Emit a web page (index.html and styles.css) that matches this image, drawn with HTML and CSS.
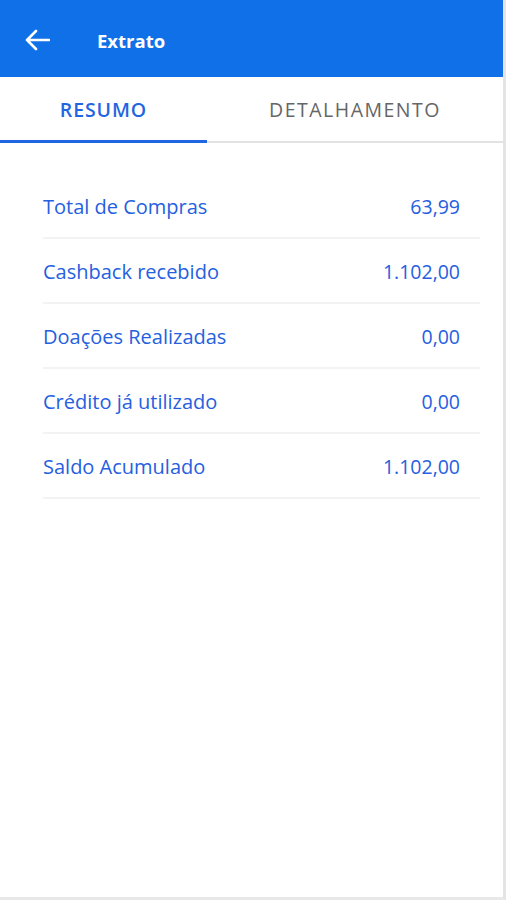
FILE: index.html
```html
<!DOCTYPE html>
<html lang="pt">
<head>
<meta charset="utf-8">
<link rel="stylesheet" href="styles.css">
</head>
<body>
<div class="frame">
  <header class="appbar">
    <svg class="back" width="26" height="22" viewBox="0 0 26 22" aria-hidden="true">
      <path d="M25 11H3M12 2L3 11l9 9" fill="none" stroke="#fff" stroke-width="2.6" stroke-linecap="round" stroke-linejoin="round"/>
    </svg>
    <h1 class="title">Extrato</h1>
  </header>
  <nav class="tabs">
    <div class="tab active">RESUMO</div>
    <div class="tab">DETALHAMENTO</div>
  </nav>
  <section class="list">
    <div class="row"><span>Total de Compras</span><span class="val">63,99</span></div>
    <div class="row"><span>Cashback recebido</span><span class="val">1.102,00</span></div>
    <div class="row"><span>Doações Realizadas</span><span class="val">0,00</span></div>
    <div class="row"><span>Crédito já utilizado</span><span class="val">0,00</span></div>
    <div class="row"><span>Saldo Acumulado</span><span class="val">1.102,00</span></div>
  </section>
</div>
</body>
</html>
```
FILE: styles.css
```css
html, body {
  margin: 0;
  padding: 0;
  background: #fff;
}
body {
  font-family: "Open Sans", "Liberation Sans", sans-serif;
}
.frame {
  width: 503px;
  height: 897px;
  border-right: 3px solid #e4e4e4;
  border-bottom: 3px solid #e8e8e8;
  background: #fff;
  display: flex;
  flex-direction: column;
}
.appbar {
  height: 77px;
  background: #1070e8;
  display: flex;
  align-items: center;
  padding-left: 24px;
  box-sizing: border-box;
}
.back {
  display: block;
  margin-top: 2px;
}
.title {
  margin: 4px 0 0 47px;
  color: #fff;
  font-size: 18.5px;
  font-weight: 700;
  font-family: "Open Sans", sans-serif;
}
.tabs {
  display: flex;
  height: 66px;
  border-bottom: 2px solid #e2e2e2;
  box-sizing: border-box;
}
.tab {
  flex: 0 0 207px;
  display: flex;
  align-items: center;
  justify-content: center;
  font-size: 19.5px;
  letter-spacing: 1.5px;
  color: #666;
  padding-top: 1px;
}
.tab + .tab {
  flex: 1;
}
.tab.active {
  color: #1f66e0;
  font-weight: 600;
  letter-spacing: 0.9px;
  border-bottom: 3px solid #1f66e0;
  margin-bottom: -2px;
}
.list {
  padding: 31px 23px 0 43px;
}
.row {
  display: flex;
  justify-content: space-between;
  align-items: center;
  height: 65px;
  box-sizing: border-box;
  padding: 3px 20px 1px 0;
  border-bottom: 2px solid #f3f3f3;
  color: #2560e0;
  font-size: 20px;
  letter-spacing: 0;
}
.val {
  font-size: 19.5px;
}
```
